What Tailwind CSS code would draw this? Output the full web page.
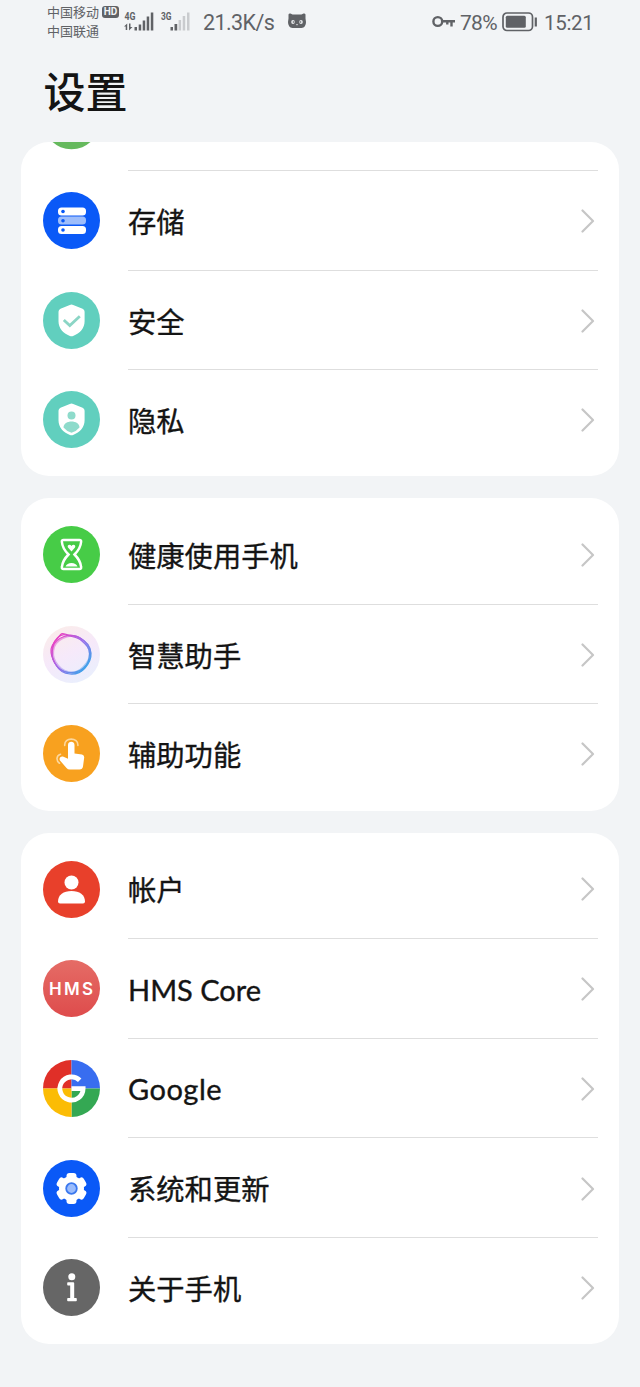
<!DOCTYPE html>
<html lang="zh-CN">
<head>
<meta charset="utf-8">
<meta name="viewport" content="width=device-width, initial-scale=1">
<title>设置</title>
<script src="https://cdn.jsdelivr.net/npm/@tailwindcss/browser@4"></script>
</head>
<body class="h-[1387px] w-[640px] overflow-hidden bg-[#f2f4f6] font-['Noto_Sans_CJK_SC',sans-serif] text-[#141414]">
<svg class="hidden">
  <symbol id="chev" viewBox="0 0 14 24"><path d="M1.5 1.5 12 12 1.5 22.5" fill="none" stroke="#c6c6c6" stroke-width="2.2" stroke-linecap="round" stroke-linejoin="round"/></symbol>
</svg>

<header class="flex h-[46px] items-start justify-between pl-[47px] pr-[46px] text-[#606266]">
  <div class="flex items-start">
    <div class="w-[73px] pt-[2px] text-[13px] leading-[19px]">
      <div class="flex items-center gap-[3px] whitespace-nowrap">中国移动<span class="flex h-[12px] w-[17px] shrink-0 items-center justify-center rounded-[3px] bg-[#606266] font-['Roboto',sans-serif] text-[10px] font-bold leading-none text-[#f2f4f6]">HD</span></div>
      <div>中国联通</div>
    </div>
    <svg class="ml-[4px] mt-[10px] h-[22px] w-[68px]" viewBox="0 0 68 22" fill="#606266">
      <text x="0.5" y="10" font-family="Roboto" font-weight="700" font-size="10.5" textLength="11" lengthAdjust="spacingAndGlyphs">4G</text>
      <path d="M3.200 13.500v6.500H1.700v-3.500H0zM5 13.500h1.500v3.600h2L5 20.600z"/>
      <rect x="10.500" y="17" width="2.500" height="3.500"/><rect x="14.700" y="14.500" width="2.500" height="6"/><rect x="18.700" y="10.500" width="2.500" height="10"/><rect x="22.700" y="6.500" width="2.500" height="14"/><rect x="26.800" y="2.500" width="2.500" height="18"/>
      <text x="37" y="10" font-family="Roboto" font-weight="700" font-size="10.500" textLength="10.500" lengthAdjust="spacingAndGlyphs">3G</text>
      <rect x="46.500" y="17" width="2.500" height="3.500"/><rect x="50.500" y="14" width="2.700" height="6.500"/>
      <g fill="#c9cbce"><rect x="54.600" y="10" width="2.500" height="10.500"/><rect x="58.700" y="6" width="2.500" height="14.500"/><rect x="63" y="2.500" width="2.500" height="18"/></g>
    </svg>
    <span class="ml-[11px] mt-[9px] w-[72px] whitespace-nowrap font-['Roboto',sans-serif] text-[21.500px] leading-[28px] tracking-[-0.600px]">21.3K/s</span>
    <svg class="ml-[13px] mt-[13px] h-[16px] w-[18px]" viewBox="0 0 18 16"><path d="M.5 1.500Q1 0 2.500.5L4.500 1.400h9L15.500.5Q17 0 17.500 1.500v4L18 9q0 5.500-4.500 6h-9Q0 14.500 0 9L.5 5.500z" fill="#606266"/><ellipse cx="5" cy="9" rx="1.800" ry="2" fill="#e8eaec"/><ellipse cx="13" cy="9" rx="1.800" ry="2" fill="#e8eaec"/><circle cx="5.500" cy="9" r=".8" fill="#606266"/><circle cx="12.500" cy="9" r=".8" fill="#606266"/><path d="M7.800 11.200h2.400L9 12.500z" fill="#e8eaec"/></svg>
  </div>
  <div class="flex items-start font-['Roboto',sans-serif] leading-[28px]">
    <svg class="mr-[5px] mt-[15px] h-[13px] w-[23px]" viewBox="0 0 23 13" fill="none" stroke="#606266" stroke-width="2.400"><circle cx="5.800" cy="6.500" r="4.400"/><path d="M10 6.200h13M19.500 6.500v5M15.300 6.500v3"/></svg>
    <span class="mt-[9px] w-[42px] whitespace-nowrap text-[21px] tracking-[-0.700px]">78%</span>
    <svg class="mt-[12px] h-[20px] w-[36px]" viewBox="0 0 36 20"><rect x="1" y="1" width="29.500" height="17.500" rx="4" fill="none" stroke="#606266" stroke-width="1.700"/><rect x="3.800" y="3.800" width="20" height="12" rx="1.500" fill="#606266"/><path d="M33.800 5.500v9" stroke="#606266" stroke-width="2.200"/></svg>
    <span class="ml-[6px] mt-[9px] w-[50px] whitespace-nowrap text-[20.500px] tracking-[-0.300px]">15:21</span>
  </div>
</header>

<h1 class="flex h-[96px] items-center pb-[8px] pl-[43.500px] text-[42px] font-medium leading-none">设置</h1>

<main class="flex flex-col gap-[22px] pl-[21px] pr-[21.500px] text-[28.300px] [-webkit-text-stroke:0.350px_#141414]">
  <section class="h-[334px] overflow-hidden rounded-[28px] bg-white pl-[21.500px] pr-[21px]">
    <div class="flex h-[29px] items-end">
      <div class="flex h-[29px] w-[57px] items-start overflow-hidden"><svg class="h-[8px] w-[57px]" viewBox="0 49 57 8"><circle cx="28.500" cy="28" r="28.300" fill="#65b95d"/></svg></div>
      <div class="ml-[28.500px] h-full flex-1 border-b border-[#dedede]"></div>
    </div>
    <div class="flex h-[99.600px] items-center">
      <svg class="size-[57px] shrink-0" viewBox="0 0 57 57"><circle cx="28.500" cy="28.500" r="28.500" fill="#0a59f7"/><g fill="#fff"><rect x="15" y="15.500" width="28" height="8" rx="3.500"/><rect x="15" y="24.600" width="28" height="8" rx="3.500" fill="#9dbdfb"/><rect x="15" y="34" width="28" height="8" rx="3.500"/></g><g fill="#0a59f7"><circle cx="20" cy="19.500" r="1.800"/><circle cx="20" cy="28.700" r="1.800"/><circle cx="20" cy="38" r="1.800"/></g></svg>
      <div class="ml-[28.500px] flex h-full flex-1 items-center justify-between border-b border-[#dedede] pr-[3px] pt-[2px]"><span>存储</span><svg class="h-[24px] w-[14px]"><use href="#chev"/></svg></div>
    </div>
    <div class="flex h-[99.600px] items-center">
      <svg class="size-[57px] shrink-0" viewBox="0 0 57 57"><circle cx="28.500" cy="28.500" r="28.500" fill="#61cfbe"/><path d="M26.800 12.900q1.700-.8 3.400 0l9.400 3.800q2 .9 2 3v9.500c0 7-4.500 12-11.500 14.700q-1.600.6-3.200 0C20 41.200 15.500 36.200 15.500 29.200v-9.500q0-2.100 2-3z" fill="#fff"/><path d="m20.800 28 6 5.600 10-9.400" fill="none" stroke="#8bd5c5" stroke-width="2.800"/></svg>
      <div class="ml-[28.500px] flex h-full flex-1 items-center justify-between border-b border-[#dedede] pr-[3px] pt-[2px]"><span>安全</span><svg class="h-[24px] w-[14px]"><use href="#chev"/></svg></div>
    </div>
    <div class="flex h-[99.600px] items-center">
      <svg class="size-[57px] shrink-0" viewBox="0 0 57 57"><circle cx="28.500" cy="28.500" r="28.500" fill="#61cfbe"/><path d="M26.800 12.900q1.700-.8 3.400 0l9.400 3.800q2 .9 2 3v9.500c0 7-4.500 12-11.500 14.700q-1.600.6-3.200 0C20 41.200 15.500 36.200 15.500 29.200v-9.500q0-2.100 2-3z" fill="#fff"/><circle cx="28.500" cy="24.500" r="4" fill="#8edbcb"/><path d="M20.500 36.500c0-4 4-6 8-6s8 2 8 6q-3.300 4-8 5.200-4.700-1.200-8-5.200z" fill="#8edbcb"/></svg>
      <div class="ml-[28.500px] flex h-full flex-1 items-center justify-between pr-[3px] pt-[1px]"><span>隐私</span><svg class="h-[24px] w-[14px]"><use href="#chev"/></svg></div>
    </div>
  </section>

  <section class="h-[313px] rounded-[28px] bg-white pl-[21.500px] pr-[21px] pt-[7px]">
    <div class="flex h-[99.600px] items-center">
      <svg class="size-[57px] shrink-0" viewBox="0 0 57 57"><circle cx="28.500" cy="28.500" r="28.500" fill="#47cc47"/><path d="M20.500 14h16q2 0 1.600 2c-.5 6-3.600 9.500-6.600 12.500 3 3 6.100 6.500 6.600 12.500q.4 2-1.600 2h-16q-2 0-1.600-2c.5-6 3.600-9.500 6.600-12.500-3-3-6.100-6.500-6.600-12.500q-.4-2 1.600-2z" fill="none" stroke="#fff" stroke-width="2.500"/><path d="M28.500 25.500 25 21.500c-1.300-2 1.800-4 3.500-1.500 1.700-2.500 4.800-.5 3.500 1.500zM22.500 40.500c1-2 3-3.500 6-3.500s5 1.500 6 3.500z" fill="#fff"/></svg>
      <div class="ml-[28.500px] flex h-full flex-1 items-center justify-between border-b border-[#dedede] pr-[3px] pt-[2px]"><span>健康使用手机</span><svg class="h-[24px] w-[14px]"><use href="#chev"/></svg></div>
    </div>
    <div class="flex h-[99.600px] items-center">
      <svg class="size-[57px] shrink-0" viewBox="0 0 57 57"><defs><linearGradient id="halo" x1=".2" y1="0" x2=".7" y2="1"><stop stop-color="#fbece9"/><stop offset=".5" stop-color="#f6e9fa"/><stop offset="1" stop-color="#e9effd"/></linearGradient><linearGradient id="ring" gradientUnits="userSpaceOnUse" x1="12" y1="12" x2="45" y2="41"><stop stop-color="#ec3fc0"/><stop offset=".5" stop-color="#9d6bea"/><stop offset="1" stop-color="#3aa5ea"/></linearGradient></defs><circle cx="28.500" cy="28.500" r="28.500" fill="url(#halo)"/><g fill="none" stroke="url(#ring)" stroke-width="1.200"><path d="M22 8c5 2 10 1.500 15 4 6 3 10.500 8.500 11 15s-2.500 11-6 15-9 6.500-15 6-11-3.500-14-9-5.500-9-5-15 3.500-8 6.500-11.500S17.500 6.500 22 8z"/><path d="M21 10.500c6-2 12-1.500 17 2s9 8.500 9.500 14.500-2.500 11-7 15-9.500 5-15.500 4.500-10.500-4.500-13.500-10-3-10-1.500-15.500S15.500 12.500 21 10.500z"/><path d="M23 9c5 2 11 1.500 15.500 5.500s8 7 8 13-1.500 10.500-5.500 15-9.500 5-15.500 4-10-3.500-13.500-9-4-10.500-2.500-17 8-13.500 13.500-11.500z"/><path d="M24 10.500c5-1.500 10 0 14 3s9 8.500 9 14.500-3 9.500-7 13.500-9 6-15 4.500-9.500-5-12.500-10-3-10-1.500-15 7.500-9 13-10.500z" stroke-width="2" opacity=".45"/></g></svg>
      <div class="ml-[28.500px] flex h-full flex-1 items-center justify-between border-b border-[#dedede] pr-[3px] pt-[2px]"><span>智慧助手</span><svg class="h-[24px] w-[14px]"><use href="#chev"/></svg></div>
    </div>
    <div class="flex h-[99.600px] items-center">
      <svg class="size-[57px] shrink-0" viewBox="0 0 57 57"><circle cx="28.500" cy="28.500" r="28.500" fill="#f8a11f"/><path d="M25 20c0-4.300 6.500-4.300 6.500 0v8.500l7.500 1q2.300.5 2.200 3L40 41.500q-.5 3-3.500 3H26.800q-2 0-3.300-1.500L17 35.500c-1.500-2.500 1-4.700 3.500-3.700l4.500 2z" fill="#fff"/><g fill="none" stroke="#fcd79d" stroke-width="1.600" stroke-linecap="round"><path d="M21.700 20.500c-.7-8.500 13.800-8.500 13.200 0M17.500 29.200c-4.500 1.300-4.500 6.800-1 9"/></g></svg>
      <div class="ml-[28.500px] flex h-full flex-1 items-center justify-between pr-[3px] pt-[1px]"><span>辅助功能</span><svg class="h-[24px] w-[14px]"><use href="#chev"/></svg></div>
    </div>
  </section>

  <section class="h-[511px] rounded-[28px] bg-white pl-[21.500px] pr-[21px] pt-[6.500px]">
    <div class="flex h-[99.600px] items-center">
      <svg class="size-[57px] shrink-0" viewBox="0 0 57 57"><circle cx="28.500" cy="28.500" r="28.500" fill="#e8402b"/><circle cx="28.500" cy="21.500" r="7" fill="#fff"/><path d="M15 40.500C15 34 20.500 30 28.500 30S42 34 42 40.500q0 2-2 2H17q-2 0-2-2z" fill="#fff"/></svg>
      <div class="ml-[28.500px] flex h-full flex-1 items-center justify-between border-b border-[#dedede] pr-[3px] pt-[1px]"><span>帐户</span><svg class="h-[24px] w-[14px]"><use href="#chev"/></svg></div>
    </div>
    <div class="flex h-[99.600px] items-center">
      <svg class="size-[57px] shrink-0 [-webkit-text-stroke:0px]" viewBox="0 0 57 57"><defs><linearGradient id="hms" x2="0" y2="1"><stop stop-color="#e56c66"/><stop offset="1" stop-color="#de4c4c"/></linearGradient></defs><circle cx="28.500" cy="28.500" r="28.500" fill="url(#hms)"/><text x="6" y="35" font-family="Inter" font-weight="600" font-size="17" fill="#fff" textLength="44" lengthAdjust="spacing">HMS</text></svg>
      <div class="ml-[28.500px] flex h-full flex-1 items-center justify-between border-b border-[#dedede] pr-[3px] pt-[2px]"><span class="font-['Lato',sans-serif] text-[29px]">HMS Core</span><svg class="h-[24px] w-[14px]"><use href="#chev"/></svg></div>
    </div>
    <div class="flex h-[99.600px] items-center">
      <svg class="size-[57px] shrink-0" viewBox="0 0 57 57"><path d="M28.500 28.500V0A28.500 28.500 0 0 0 0 28.500z" fill="#e02f28"/><path d="M28.500 28.500V0A28.500 28.500 0 0 1 57 28.500z" fill="#386df0"/><path d="M28.500 28.500H57A28.500 28.500 0 0 1 28.500 57z" fill="#34a853"/><path d="M28.500 28.500H0A28.500 28.500 0 0 0 28.500 57z" fill="#fbbc05"/><path d="M36.700 20.300A11.600 11.600 0 1 0 40.100 28.700H28.500" fill="none" stroke="#fff" stroke-width="4.800"/></svg>
      <div class="ml-[28.500px] flex h-full flex-1 items-center justify-between border-b border-[#dedede] pr-[3px] pt-[2px]"><span class="font-['Lato',sans-serif] text-[29px] tracking-[0.500px]">Google</span><svg class="h-[24px] w-[14px]"><use href="#chev"/></svg></div>
    </div>
    <div class="flex h-[99.600px] items-center">
      <svg class="size-[57px] shrink-0" viewBox="0 0 57 57"><circle cx="28.500" cy="28.500" r="28.500" fill="#0a59f7"/><g fill="#fff"><circle cx="28.500" cy="28.500" r="12.500"/><rect x="23.500" y="13" width="10" height="31" rx="3"/><rect x="23.500" y="13" width="10" height="31" rx="3" transform="rotate(60 28.500 28.500)"/><rect x="23.500" y="13" width="10" height="31" rx="3" transform="rotate(120 28.500 28.500)"/></g><circle cx="28.500" cy="28.500" r="5.300" fill="#9bbcfc" stroke="#3b78ee" stroke-width="1.800"/></svg>
      <div class="ml-[28.500px] flex h-full flex-1 items-center justify-between border-b border-[#dedede] pr-[3px] pt-[2px]"><span>系统和更新</span><svg class="h-[24px] w-[14px]"><use href="#chev"/></svg></div>
    </div>
    <div class="flex h-[99.600px] items-center">
      <svg class="size-[57px] shrink-0" viewBox="0 0 57 57"><circle cx="28.500" cy="28.500" r="28.500" fill="#666"/><circle cx="28.800" cy="17.700" r="3.500" fill="#fff"/><path d="M25 23.200h5.200q1 0 1 1V39h1.800q.8 0 .8.800v1.700q0 .8-.8.800h-8q-.8 0-.8-.8v-1.700q0-.8.800-.8h2.200V26.500H25q-.8 0-.8-.8V24q0-.8.800-.8z" fill="#fff"/></svg>
      <div class="ml-[28.500px] flex h-full flex-1 items-center justify-between pr-[3px] pt-[1px]"><span>关于手机</span><svg class="h-[24px] w-[14px]"><use href="#chev"/></svg></div>
    </div>
  </section>
</main>
</body>
</html>
